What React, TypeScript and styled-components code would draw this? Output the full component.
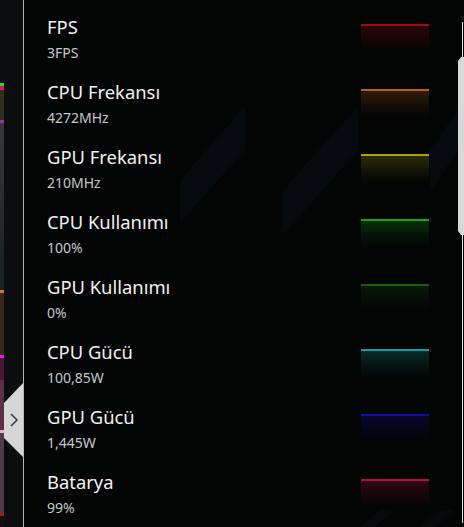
import React from 'react';
import styled, { createGlobalStyle } from 'styled-components';

const GlobalStyle = createGlobalStyle`
    html, body {
        margin: 0;
        padding: 0;
        background: #030303;
    }
    body {
        font-family: 'Noto Sans', 'Open Sans', sans-serif;
    }
`;

const Screen = styled.div`
    position: relative;
    width: 464px;
    height: 527px;
    overflow: hidden;
    display: flex;
    background: #030404;
`;

const LeftStrip = styled.div`
    width: 23px;
    height: 100%;
    display: flex;
    background: #0b0d0f;
    flex-shrink: 0;
`;

const ColorColumn = styled.div`
    width: 4px;
    display: flex;
    flex-direction: column;
`;

const Segment = styled.div<{ $h: number; $bg: string }>`
    height: ${p => p.$h}px;
    flex-shrink: 0;
    background: ${p => p.$bg};
`;

const Divider = styled.div`
    width: 1px;
    height: 100%;
    background: #b4b4b4;
    flex-shrink: 0;
`;

const Panel = styled.div`
    position: relative;
    flex: 1;
    display: flex;
    flex-direction: column;
`;

const Decor = styled.svg`
    position: absolute;
    left: -24px;
    top: 0;
    width: 464px;
    height: 527px;
    pointer-events: none;
`;

const Row = styled.div`
    position: relative;
    height: 65px;
    display: grid;
    grid-template-columns: 1fr 68px;
    align-items: start;
    padding: 0 35px 0 23px;
`;

const TextBlock = styled.div`
    padding-top: 15px;
    display: flex;
    flex-direction: column;
`;

const Label = styled.div`
    font-size: 18.4px;
    line-height: 24px;
    color: #f2f2f2;
`;

const Value = styled.div`
    margin-top: 5px;
    font-size: 14px;
    line-height: 18px;
    color: #c8c8c8;
`;

const Bar = styled.div<{ $color: string }>`
    margin-top: 24px;
    height: 26px;
    border-top: 2px solid ${p => p.$color};
    background: linear-gradient(to bottom, ${p => p.$color}40, ${p => p.$color}1a 55%, transparent);
`;

const Tab = styled.svg`
    position: absolute;
    left: 4px;
    top: 383px;
    width: 19px;
    height: 74px;
`;

const ScrollLine = styled.div`
    position: absolute;
    left: 462px;
    top: 22px;
    width: 1px;
    height: 501px;
    background: #e6e6e6;
`;

const ScrollThumb = styled.div`
    position: absolute;
    left: 458px;
    top: 57px;
    width: 6px;
    height: 178px;
    background: #d8d8d8;
    clip-path: polygon(0 4px, 3px 0, 100% 0, 100% 100%, 3px 100%, 0 calc(100% - 4px));
`;

const segments = [
    { h: 83, bg: '#0b0d0f' },
    { h: 3, bg: '#1ee01e' },
    { h: 4, bg: '#e0145a' },
    { h: 30, bg: '#2e301c' },
    { h: 3, bg: '#8c34a8' },
    { h: 142, bg: 'linear-gradient(#3a383c, #1c2222)' },
    { h: 25, bg: '#1a2422' },
    { h: 3, bg: '#d0781e' },
    { h: 62, bg: '#3a2816' },
    { h: 3, bg: '#e01ee0' },
    { h: 22, bg: '#4a1438' },
    { h: 50, bg: '#5c3048' },
    { h: 3, bg: '#f0a8c8' },
    { h: 80, bg: '#503a48' },
    { h: 3, bg: '#a01e24' },
    { h: 11, bg: '#160e10' },
];

const stats = [
    { label: 'FPS', value: '3FPS', color: '#a00c12' },
    { label: 'CPU Frekansı', value: '4272MHz', color: '#b4621a' },
    { label: 'GPU Frekansı', value: '210MHz', color: '#a8a212' },
    { label: 'CPU Kullanımı', value: '100%', color: '#12a812' },
    { label: 'GPU Kullanımı', value: '0%', color: '#1a5a14' },
    { label: 'CPU Gücü', value: '100,85W', color: '#1a9c9c' },
    { label: 'GPU Gücü', value: '1,445W', color: '#0e0ea6' },
    { label: 'Batarya', value: '99%', color: '#b4103e' },
];

const App = () => {
    return (
        <Screen>
            <GlobalStyle />
            <LeftStrip>
                <ColorColumn>
                    {segments.map((s, i) => (
                        <Segment key={i} $h={s.h} $bg={s.bg} />
                    ))}
                </ColorColumn>
            </LeftStrip>
            <Divider />
            <Panel>
                <Decor viewBox="0 0 464 527">
                    <line x1="300" y1="0" x2="300" y2="527" stroke="#060708" strokeWidth="1" />
                    <line x1="24" y1="255" x2="464" y2="255" stroke="#050607" strokeWidth="1" />
                    <polygon points="245,106 245,150 180,223 180,180" fill="#050a0d" />
                    <polygon points="358,106 358,150 283,235 283,190" fill="#050a0d" />
                    <polygon points="458,110 458,150 430,192 430,150" fill="#050a0d" />
                    <polygon points="360,527 380,510 395,510 375,527" fill="#050a0d" />
                    <polygon points="420,527 440,510 455,510 435,527" fill="#050a0d" />
                </Decor>
                {stats.map(s => (
                    <Row key={s.label}>
                        <TextBlock>
                            <Label>{s.label}</Label>
                            <Value>{s.value}</Value>
                        </TextBlock>
                        <Bar $color={s.color} />
                    </Row>
                ))}
            </Panel>
            <Tab viewBox="0 0 19 74">
                <polygon points="19,0 0,20 0,55 19,74" fill="#d6d6d6" />
                <polyline points="7,31 13,37 7,43" fill="none" stroke="#3a3a3a" strokeWidth="1.5" />
            </Tab>
            <ScrollLine />
            <ScrollThumb />
        </Screen>
    );
};

export default App;
